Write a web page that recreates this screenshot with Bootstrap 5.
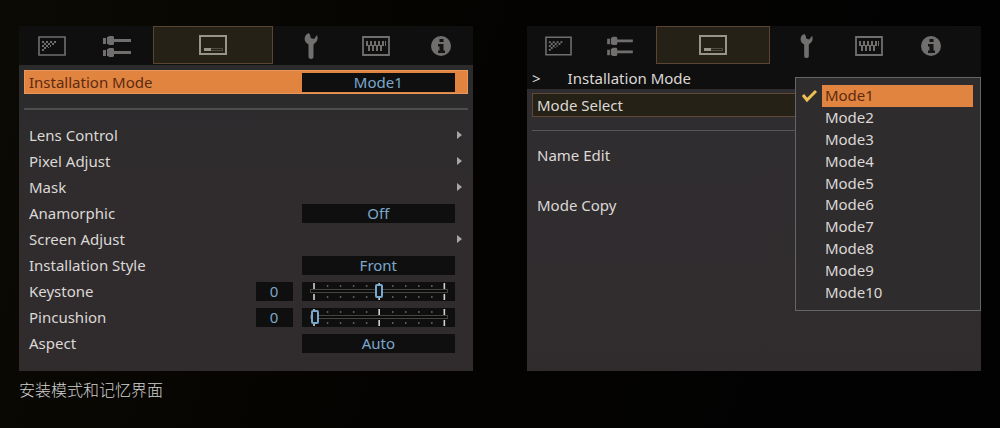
<!DOCTYPE html>
<html lang="zh-CN">
<head>
<meta charset="utf-8">
<meta name="viewport" content="width=device-width, initial-scale=1">
<title>安装模式和记忆界面</title>
<link href="https://cdn.jsdelivr.net/npm/bootstrap@5.3.0/dist/css/bootstrap.min.css" rel="stylesheet">
<style>
:root{--ink:#dcd8d5;--blue:#7ba7cb;--orange:#e1843f;--dark:#100f10;--font:"Noto Sans","Noto Sans CJK SC",sans-serif}
body{background:linear-gradient(110deg,#0c0a04,#040301 45%,#020203);color:var(--ink);font:15px/22px var(--font);min-height:100vh}
button,select,input{font:inherit;color:inherit}
.stage{padding:26px 19px 16px}
.screens{--bs-gutter-x:54px}
.osd{background:#2f2c2e}
.tabbar{display:grid;grid-template-columns:65fr 65fr 129fr 65fr 65fr 65fr;height:39px;background:var(--dark)}
.tabbar.inset{padding-right:19px}
.tabbar button{background:none;border:0;padding:0;color:#706f6e;display:flex;align-items:center;justify-content:center}
.tabbar button[aria-selected=true]{background:#252116;border:1px solid #5b4431;margin:0 5px 1px 4px;color:#97948a}
.tabbar svg{display:block}
.panel-main{background:linear-gradient(#2b2b2c,#302c2e 40%);padding:5px 5px 15px}
.panel-sub{background:linear-gradient(#302d30,#302c2e);padding:4px 0 15px 5px}
.setting{display:flex;align-items:center;height:26px;padding:0 13px 0 5px;color:var(--ink);text-decoration:none}
.setting.current{height:24px;background:var(--orange);border:1px solid #e8975c;padding:0 12px 0 4px;color:#5c2b12}
.setting label,.setting .title{flex:1}
.field{height:19px;width:36%;min-width:120px;background:var(--dark);color:var(--blue)}
select.field{appearance:none;border:0;border-radius:0;padding:0;text-align:center;text-align-last:center;line-height:19px}
.num{width:37px;height:19px;line-height:19px;background:var(--dark);color:var(--blue);text-align:center;margin-right:9px}
.arrow{width:5px;height:8px;margin-right:-7px}
.rule{height:2px;background:#4d4e4e;margin:14px 0 12px}
.slider{display:grid;padding:0 7px 0 8px}
.slider>*{grid-area:1/1;width:100%;height:19px}
.slider input{appearance:none;background:none;margin:0;display:block}
.slider input::-webkit-slider-runnable-track{height:4px;border:1px solid #454540;background:#0b0b0b}
.slider input::-webkit-slider-thumb{appearance:none;width:8px;height:14px;margin-top:-6px;border:2px solid var(--blue);border-radius:2px;background:#10151a}
.slider input::-moz-range-thumb{width:4px;height:10px;border:2px solid var(--blue);border-radius:2px;background:#10151a}
.crumb{height:24px;background:var(--dark);display:flex;align-items:center;gap:27px;padding:2px 5px 0}
.subitem{display:block;width:100%;height:24px;line-height:22px;padding:0 4px;text-align:left;background:none;border:1px solid transparent;color:var(--ink)}
.subitem.current{background:#252116;border-color:#614835;border-right:0}
.subitem+.subitem{margin-top:26px}
.subrule{height:1px;background:#565556;margin:13px 0 12px}
.picker{top:51px;right:0;width:41%;min-width:180px;background:#2f2c2e;border:1px solid #656466;padding:7px 7px 7px 6px}
.picker ul{display:grid;grid-auto-rows:1fr;height:218px}
.picker li{display:flex;align-items:center}
.picker li svg{width:15px;flex:none;margin-right:5px}
.picker button{flex:1;align-self:stretch;border:0;padding:0 3px;text-align:left;background:none;line-height:21px}
.picker button[aria-pressed=true]{background:var(--orange);color:#5c2b12}
.caption-line{font-size:16px;line-height:24px;margin:6px 0 0;font-family:"Noto Sans CJK SC",sans-serif;font-weight:300;color:#d0d0d0}
</style>
</head>
<body>
<svg width="0" height="0" class="position-absolute" aria-hidden="true">
<defs>
<symbol id="picture" viewBox="0 0 28 20"><path d="M1 1h26v18H1z" fill="none" stroke="currentColor" stroke-width="1.6"/><path d="M4 5h2v2H4zM8 5h2v2H8zM12 5h2v2h-2zM16 5h2v2h-2zM6 7h2v2H6zM10 7h2v2h-2zM14 7h2v2h-2zM4 9h2v2H4zM8 9h2v2H8zM12 9h1v2h-1zM6 11h2v2H6zM10 11h1v1h-1zM4 13h2v2H4z" fill="currentColor"/></symbol>
<symbol id="sliders" viewBox="0 0 30 24"><path d="M1 4h3v6H1zM5 3h1l1-1h4l1 1v2h17v3H12v2l-1 1H7l-1-1H5zM1 16h3v6H1zM5 15h1l1-1h4l1 1v2h17v3H12v2l-1 1H7l-1-1H5z" fill="currentColor"/></symbol>
<symbol id="install" viewBox="0 0 28 20"><path d="M1 1h26v18H1z" fill="none" stroke="currentColor" stroke-width="2"/><path d="M5.500 13.500h18v2h-18z" fill="none" stroke="currentColor" opacity=".4"/><path d="M5 13h7v3H5z" fill="currentColor"/></symbol>
<symbol id="wrench" viewBox="0 0 14 28"><path d="M5 1 3 2C0 4 0 9 2.500 11l2 1.500V25q0 2 2.500 2t2.500-2V12.500l1.500-1.500c3-2 3-5 2-8l-3 4-3.500-1V4z" fill="currentColor"/></symbol>
<symbol id="pattern" viewBox="0 0 28 20"><path d="M1 1h26v18H1z" fill="none" stroke="currentColor" stroke-width="1.800"/><path d="M4 5h2v5H4zM8 5h2v5H8zM12 5h2v5h-2zM16 5h2v5h-2zM20 5h2v5h-2zM23 5h1v5h-1zM6 9h2v6H6zM10 9h2v6h-2zM14 9h2v6h-2zM18 9h2v6h-2z" fill="currentColor"/></symbol>
<symbol id="about" viewBox="0 0 20 20"><circle cx="10" cy="10" r="10" fill="currentColor"/><path d="M8.500 3h4v3h-4zM7 8h5.500v6.500H14V17H7v-2.500h1.500v-4H7z" fill="#151415"/></symbol>
<symbol id="ticks" viewBox="0 0 138 19"><path d="M17.500 3v2M30.500 3v2M43.500 3v2M56.500 3v2M82.500 3v2M95.500 3v2M108.500 3v2M121.500 3v2M17.500 14v2M30.500 14v2M43.500 14v2M56.500 14v2M82.500 14v2M95.500 14v2M108.500 14v2M121.500 14v2" stroke="#5b5b59" stroke-width="1.500"/><path d="M4 1v6M69 1v6M134 1v6M4 12v6M69 12v6M134 12v6" stroke="#d2d0cc" stroke-width="1.600"/></symbol>
<symbol id="more" viewBox="0 0 5 8"><path d="M0 0l5 4-5 4z" fill="#aaa6a3"/></symbol>
</defs></svg>

<main class="container-fluid stage">
<div class="row screens">
<section class="col-6 d-flex">
<div class="osd w-100">
<div class="tabbar" role="tablist">
<button role="tab" aria-label="Picture"><svg width="28" height="20"><use href="#picture"/></svg></button>
<button role="tab" aria-label="Signal"><svg width="30" height="24"><use href="#sliders"/></svg></button>
<button role="tab" aria-label="Installation" aria-selected="true"><svg width="28" height="20"><use href="#install"/></svg></button>
<button role="tab" aria-label="Tools"><svg width="14" height="28"><use href="#wrench"/></svg></button>
<button role="tab" aria-label="Function"><svg width="28" height="20"><use href="#pattern"/></svg></button>
<button role="tab" aria-label="Information"><svg width="20" height="20"><use href="#about"/></svg></button>
</div>
<div class="panel-main">
<div class="setting current"><label for="mode">Installation Mode</label><select class="field" id="mode"><option>Mode1</option></select></div>
<div class="rule"></div>
<a class="setting" href="#"><span class="title">Lens Control</span><svg class="arrow"><use href="#more"/></svg></a>
<a class="setting" href="#"><span class="title">Pixel Adjust</span><svg class="arrow"><use href="#more"/></svg></a>
<a class="setting" href="#"><span class="title">Mask</span><svg class="arrow"><use href="#more"/></svg></a>
<div class="setting"><label for="ana">Anamorphic</label><select class="field" id="ana"><option>Off</option></select></div>
<a class="setting" href="#"><span class="title">Screen Adjust</span><svg class="arrow"><use href="#more"/></svg></a>
<div class="setting"><label for="style">Installation Style</label><select class="field" id="style"><option>Front</option></select></div>
<div class="setting"><label for="key">Keystone</label><output class="num" for="key">0</output><div class="field slider"><svg viewBox="0 0 138 19" preserveAspectRatio="none"><use href="#ticks"/></svg><input type="range" id="key" min="-5" max="5" value="0"></div></div>
<div class="setting"><label for="pin">Pincushion</label><output class="num" for="pin">0</output><div class="field slider"><svg viewBox="0 0 138 19" preserveAspectRatio="none"><use href="#ticks"/></svg><input type="range" id="pin" min="0" max="10" value="0"></div></div>
<div class="setting"><label for="aspect">Aspect</label><select class="field" id="aspect"><option>Auto</option></select></div>
</div>
</div>
</section>

<section class="col-6 d-flex">
<div class="osd w-100 position-relative d-flex flex-column">
<div class="tabbar inset" role="tablist">
<button role="tab" aria-label="Picture"><svg width="27" height="20"><use href="#picture"/></svg></button>
<button role="tab" aria-label="Signal"><svg width="28" height="22"><use href="#sliders"/></svg></button>
<button role="tab" aria-label="Installation" aria-selected="true"><svg width="28" height="20"><use href="#install"/></svg></button>
<button role="tab" aria-label="Tools"><svg width="13" height="26"><use href="#wrench"/></svg></button>
<button role="tab" aria-label="Function"><svg width="28" height="20"><use href="#pattern"/></svg></button>
<button role="tab" aria-label="Information"><svg width="20" height="20"><use href="#about"/></svg></button>
</div>
<div class="crumb"><span>&gt;</span><span>Installation Mode</span></div>
<div class="panel-sub flex-grow-1">
<button class="subitem current">Mode Select</button>
<div class="subrule"></div>
<button class="subitem">Name Edit</button>
<button class="subitem">Mode Copy</button>
</div>
<div class="picker position-absolute">
<ul class="list-unstyled mb-0">
<li><svg height="15" viewBox="0 0 15 15"><path d="M1 7l4 5 9-9" fill="none" stroke="#efbf55" stroke-width="3"/></svg><button aria-pressed="true">Mode1</button></li>
<li><svg height="15"></svg><button>Mode2</button></li>
<li><svg height="15"></svg><button>Mode3</button></li>
<li><svg height="15"></svg><button>Mode4</button></li>
<li><svg height="15"></svg><button>Mode5</button></li>
<li><svg height="15"></svg><button>Mode6</button></li>
<li><svg height="15"></svg><button>Mode7</button></li>
<li><svg height="15"></svg><button>Mode8</button></li>
<li><svg height="15"></svg><button>Mode9</button></li>
<li><svg height="15"></svg><button>Mode10</button></li>
</ul>
</div>
</div>
</section>
</div>
<p class="caption-line">安装模式和记忆界面</p>
</main>
<script src="https://cdn.jsdelivr.net/npm/bootstrap@5.3.0/dist/js/bootstrap.bundle.min.js"></script>
</body>
</html>
